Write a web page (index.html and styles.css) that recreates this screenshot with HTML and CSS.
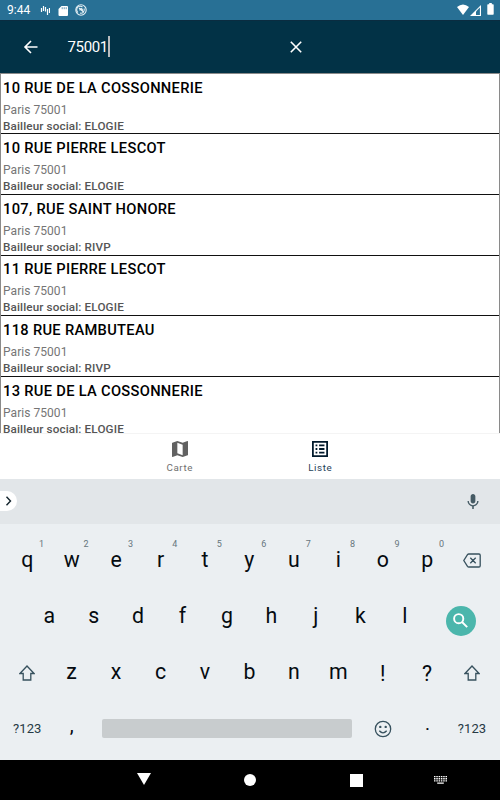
FILE: index.html
```
<!DOCTYPE html>
<html lang="fr">
<head>
<meta charset="utf-8">
<title>Recherche</title>
<link rel="stylesheet" href="styles.css">
</head>
<body>
<div class="screen">
  <header class="status">
    <span class="clock">9:44</span>
    <svg class="st-wave" viewBox="0 0 10 12"><path d="M1.500 4v4M3.500 2v5M5.500 3v4.500M7.500 5v6M9.500 4v5"/></svg>
    <svg class="st-card" viewBox="0 0 10 12"><path fill="#fff" d="M3.500 1H9q1 0 1 1v8q0 1-1 1H1.500q-1 0-1-1V4z"/><path stroke="#287095" stroke-width=".7" d="M4.200 2.200v2M6.200 2.200v2M8.200 2.200v2"/></svg>
    <svg class="st-sync" viewBox="0 0 12 12"><circle cx="6" cy="6" r="5.200"/><path d="M3 8.500A3.500 3.500 0 0 1 7.500 3M9 4.500A3.300 3.300 0 0 1 5 9M4 4l4.500 4M5 6.500A1.300 1.300 0 1 1 7 7"/></svg>
    <span class="grow"></span>
    <svg class="st-wifi" viewBox="0 0 12 11"><path d="M0 3Q6-2 12 3L6 11z"/></svg>
    <svg class="st-cell" viewBox="0 0 11 11"><path fill="#fff" d="M0 11 11 0v11z"/><path fill="#287095" d="M6 6.400 9.900 2.600V9.900H6z"/></svg>
    <svg class="st-batt" viewBox="0 0 7 12"><path d="M2.200 0h2.600v1.300H6q.7 0 .7.700v9q0 .700-.7.700H1q-.7 0-.7-.7V2q0-.7.700-.7h1.200z"/></svg>
  </header>

  <div class="search">
    <svg class="back" viewBox="0 0 16 16"><path d="M14.500 8H2M8 2 2 8l6 6"/></svg>
    <div class="query"><span>75001</span><i class="caret"></i></div>
    <svg class="clear" viewBox="0 0 12 12"><path d="m.8.800 10.400 10.400M11.200.800.800 11.200"/></svg>
  </div>

  <main class="list">
    <article class="item"><h2>10 RUE DE LA COSSONNERIE</h2><p class="city">Paris 75001</p><p class="owner">Bailleur social: ELOGIE</p></article>
    <article class="item"><h2>10 RUE PIERRE LESCOT</h2><p class="city">Paris 75001</p><p class="owner">Bailleur social: ELOGIE</p></article>
    <article class="item"><h2>107, RUE SAINT HONORE</h2><p class="city">Paris 75001</p><p class="owner">Bailleur social: RIVP</p></article>
    <article class="item"><h2>11 RUE PIERRE LESCOT</h2><p class="city">Paris 75001</p><p class="owner">Bailleur social: ELOGIE</p></article>
    <article class="item"><h2>118 RUE RAMBUTEAU</h2><p class="city">Paris 75001</p><p class="owner">Bailleur social: RIVP</p></article>
    <article class="item"><h2>13 RUE DE LA COSSONNERIE</h2><p class="city">Paris 75001</p><p class="owner">Bailleur social: ELOGIE</p></article>
  </main>

  <nav class="tabs">
    <div class="tab">
      <svg viewBox="3 3 18 18"><path d="m20.500 3-.16.030L15 5.100 9 3 3.360 4.900c-.21.070-.36.250-.36.480V20.500c0 .280.220.500.500.500l.16-.030L9 18.900l6 2.100 5.640-1.900c.210-.070.360-.250.360-.480V3.500c0-.280-.220-.500-.500-.500zM15 19l-6-2.110V5l6 2.110V19z"/></svg>
      <span>Carte</span>
    </div>
    <div class="tab active">
      <svg viewBox="3 3 18 18"><path d="M3 3v18h18V3zm16 16H5V5h14zM11 7h6v2h-6zm0 4h6v2h-6zm0 4h6v2h-6zM7 7h2v2H7zm0 4h2v2H7zm0 4h2v2H7z"/></svg>
      <span>Liste</span>
    </div>
  </nav>

  <div class="suggest">
    <div class="expand"><svg viewBox="0 0 6 10"><path d="m1 .800 4 4.200-4 4.200"/></svg></div>
    <svg class="mic" viewBox="5 2 14 19"><path d="M12 14c1.660 0 3-1.340 3-3V5c0-1.660-1.340-3-3-3S9 3.340 9 5v6c0 1.660 1.340 3 3 3zm5.300-3c0 3-2.540 5.100-5.300 5.100S6.700 14 6.700 11H5c0 3.410 2.720 6.230 6 6.720V21h2v-3.280c3.280-.480 6-3.300 6-6.720z"/></svg>
  </div>

  <section class="keyboard">
    <div class="keys top">
      <div class="key">q<sup>1</sup></div><div class="key">w<sup>2</sup></div><div class="key">e<sup>3</sup></div><div class="key">r<sup>4</sup></div><div class="key">t<sup>5</sup></div><div class="key">y<sup>6</sup></div><div class="key">u<sup>7</sup></div><div class="key">i<sup>8</sup></div><div class="key">o<sup>9</sup></div><div class="key">p<sup>0</sup></div>
      <div class="key"><svg class="del" viewBox="0 0 18 15"><path d="M5.800 1H16q1.200 0 1.200 1.200v10.600Q17.200 14 16 14H5.800Q5 14 4.500 13.300L.8 7.500 4.500 1.700Q5 1 5.800 1zM7.300 4.800l5.400 5.400M12.700 4.800l-5.400 5.400"/></svg></div>
    </div>
    <div class="keys middle">
      <div class="key">a</div><div class="key">s</div><div class="key">d</div><div class="key">f</div><div class="key">g</div><div class="key">h</div><div class="key">j</div><div class="key">k</div><div class="key">l</div>
      <div class="key go"><div class="disc"><svg viewBox="0 0 15 15"><circle cx="5.700" cy="5.700" r="4.600"/><path d="m9 9 5.200 5.200"/></svg></div></div>
    </div>
    <div class="keys">
      <div class="key"><svg class="shift" viewBox="0 0 16 16"><path d="M8 1 15 8.500h-3.200V15H4.200V8.500H1z"/></svg></div>
      <div class="key">z</div><div class="key">x</div><div class="key">c</div><div class="key">v</div><div class="key">b</div><div class="key">n</div><div class="key">m</div><div class="key punct">!</div><div class="key punct">?</div>
      <div class="key"><svg class="shift" viewBox="0 0 16 16"><path d="M8 1 15 8.500h-3.200V15H4.200V8.500H1z"/></svg></div>
    </div>
    <div class="keys">
      <div class="key sym">?123</div><div class="key comma">,</div>
      <div class="key space"><div class="bar"></div></div>
      <div class="key"><svg class="smile" viewBox="0 0 18 18"><circle cx="9" cy="9" r="7.700"/><path d="M5.300 10.800Q9 14.800 12.700 10.800"/><circle class="dot" cx="6.300" cy="6.900" r="1.200"/><circle class="dot" cx="11.700" cy="6.900" r="1.200"/></svg></div>
      <div class="key period">.</div><div class="key sym">?123</div>
    </div>
  </section>

  <footer class="sysnav">
    <svg class="n-back" viewBox="0 0 14 12"><path d="M0 0h14L7 12z"/></svg>
    <svg class="n-home" viewBox="0 0 12 12"><circle cx="6" cy="6" r="6"/></svg>
    <svg class="n-recent" viewBox="0 0 13 13"><path d="M0 0h13v13H0z"/></svg>
    <svg class="n-kbd" viewBox="0 0 13 8"><path d="M0 0h1.500v1.300H0zM2.300 0h1.500v1.300H2.300zM4.600 0h1.500v1.300H4.600zM6.900 0h1.500v1.300H6.900zM9.200 0h1.500v1.300H9.200zM11.500 0H13v1.300h-1.500zM0 2.100h1.500v1.300H0zM2.300 2.100h1.500v1.300H2.300zM4.600 2.100h1.500v1.300H4.600zM6.900 2.100h1.500v1.300H6.900zM9.200 2.100h1.500v1.300H9.200zM11.500 2.100H13v1.300h-1.500zM0 4.200h1.500v1.300H0zM2.300 4.200h1.500v1.300H2.300zM4.600 4.200h1.500v1.300H4.600zM6.900 4.200h1.500v1.300H6.900zM9.200 4.200h1.500v1.300H9.200zM11.500 4.200H13v1.300h-1.500zM3.200 6.400h6.600v1.400H3.200z"/></svg>
  </footer>
</div>
</body>
</html>
```
FILE: styles.css
```
* { box-sizing: border-box; }
body { margin: 0; font-family: Roboto, "Liberation Sans", sans-serif; }
h2, p { margin: 0; }
svg { display: block; flex: none; fill: none; }
.screen { width: 500px; height: 800px; display: flex; flex-direction: column; overflow: hidden; background: #fff; }
.grow { flex: 1; }

.status { height: 20px; flex: none; display: flex; align-items: center; padding: 0 6.500px 0 7px; background: #287095; color: #fff; }
.status svg { fill: #fff; }
.clock { width: 33px; font-size: 12px; line-height: 21px; letter-spacing: .05px; }
.status .st-wave { width: 10px; height: 12px; stroke: #fff; stroke-width: 1.200; fill: none; }
.status .st-card { width: 10px; height: 12px; margin-left: 8px; margin-top: 1px; }
.status .st-sync { width: 12px; height: 12px; margin-left: 7px; fill: none; stroke: #e6f0f5; stroke-width: 1.100; }
.st-wifi { width: 12px; height: 11px; margin-top: -1px; }
.st-cell { width: 11px; height: 11px; margin-left: 1px; }
.st-batt { width: 7px; height: 12px; margin-left: 6px; margin-top: -2px; }

.search { height: 53px; flex: none; display: flex; align-items: center; padding-left: 23px; background: #023246; color: #fff; border-top: 1px solid #0a2c40; }
.back { width: 16px; height: 16px; stroke: #fff; stroke-width: 1.600; }
.query { width: 221px; margin-left: 28.500px; display: flex; align-items: center; font-size: 15px; letter-spacing: -.35px; }
.caret { width: 2px; height: 21px; margin-top: -2px; background: #b9bcbe; }
.clear { width: 12px; height: 12px; margin-left: 1.500px; margin-top: -1px; stroke: #fff; stroke-width: 1.600; }

.list { height: 360px; flex: none; overflow: hidden; border: 1px solid #8a8a8a; border-width: 1px 1px 0; }
.item { height: 60.700px; padding-left: 2px; border-bottom: 1px solid #111; overflow: hidden; }
.item:first-child { height: 60.200px; }
.item h2 { font-size: 14.700px; line-height: 18px; padding-top: 4.800px; height: 26.700px; font-weight: 500; color: #000; letter-spacing: .3px; white-space: nowrap; }
.item p { font-size: 12px; color: #757575; letter-spacing: .05px; }
.item .city { line-height: 18px; height: 17px; }
.item .owner { line-height: 17px; font-weight: 500; font-size: 11.700px; color: #555; letter-spacing: .13px; }

.tabs { height: 46px; flex: none; display: flex; justify-content: center; border-top: 1px solid #f4f4f4; background: #fff; }
.tab { width: 140.500px; display: flex; flex-direction: column; align-items: center; padding-top: 8px; color: #707070; font-size: 9.800px; letter-spacing: .6px; }
.tab svg { width: 16px; height: 16px; margin-top: -1px; fill: #616161; }
.tab span { line-height: 14px; margin-top: 4px; }
.tab.active { color: #1f4259; }
.tab.active svg { fill: #021a2c; }

.suggest { height: 45px; flex: none; display: flex; align-items: center; justify-content: space-between; padding-right: 21px; background: #e2e6e9; }
.expand { width: 17px; height: 20px; border-radius: 0 10px 10px 0; background: #fff; display: flex; align-items: center; padding-left: 5px; margin-top: -1px; }
.expand svg { width: 7px; height: 10px; stroke: #12232c; stroke-width: 1.400; }
.mic { width: 12px; height: 15px; fill: #455a64; margin-top: -1px; }

.keyboard { height: 236px; flex: none; padding: 7.500px 5px 0; background: #ebeff2; }
.keys { height: 56.500px; display: flex; }
.keys.middle { padding-left: 22px; }
.key { position: relative; width: 44.450px; flex: none; display: flex; align-items: center; justify-content: center; font-size: 21.300px; line-height: 26px; color: #050b10; padding-bottom: 1px; }
.top .key { padding-bottom: 0; padding-top: 1px; }
.key sup { position: absolute; left: 34px; top: 7px; font-size: 9px; line-height: 10px; color: #66757d; }
.key svg { stroke: #37515e; stroke-width: 1.300; }
.del { width: 18px; height: 15px; margin-top: 1px; }
.shift { width: 16px; height: 16px; margin-top: 1px; }
.smile { width: 18px; height: 18px; }
.smile .dot { fill: #37515e; stroke: none; }
.go { width: 68px; padding: 9px 0 0; }
.disc { width: 30px; height: 30px; border-radius: 50%; background: #4bb6ac; display: flex; align-items: center; justify-content: center; }
.key .disc svg { width: 15px; height: 15px; stroke: #fff; stroke-width: 1.900; }
.key.punct { padding-bottom: 0; padding-top: 2px; }
.key.sym { font-size: 13px; color: #263a45; letter-spacing: .1px; }
.key.comma { padding-bottom: 9px; font-size: 20px; }
.key.period { padding-bottom: 10px; font-size: 19px; }
.key.space { width: 267px; }
.bar { width: 250px; height: 19px; border-radius: 2px; background: #c8ccce; }

.sysnav { height: 40px; flex: none; display: flex; align-items: center; padding-left: 137px; background: #000; }
.sysnav svg { fill: #fff; }
.n-back { width: 14px; height: 12px; margin-top: -2px; }
.n-home { width: 12px; height: 12px; margin-left: 92.500px; }
.n-recent { width: 13px; height: 13px; margin-left: 94.500px; }
.n-kbd { width: 13px; height: 8px; margin-left: 71px; }
```
